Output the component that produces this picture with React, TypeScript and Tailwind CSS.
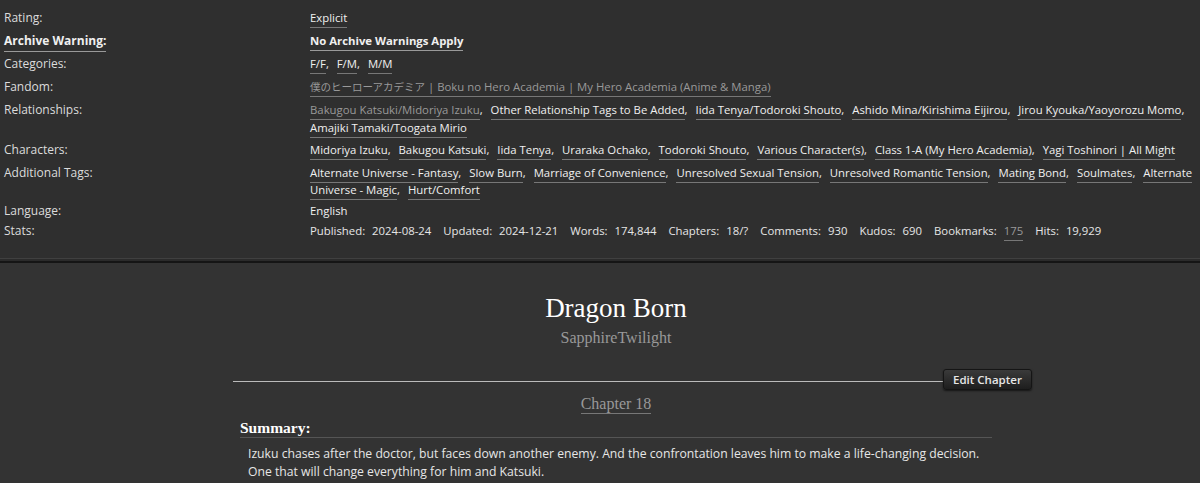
import React from "react";

const sans = "font-['Open_Sans','Noto_Sans_CJK_JP',sans-serif]";
const serif = "font-['Liberation_Serif','Noto_Serif',serif]";

type Tag = { t: string; dim?: boolean };

function TagList({ tags }: { tags: Tag[] }) {
  return (
    <>
      {tags.map((tag, i) => (
        <React.Fragment key={i}>
          <span
            className={`border-b pb-[2px] ${
              tag.dim ? "text-[#999] border-[#777]" : "text-[#f0f0f0] border-[#777]"
            }`}
          >
            {tag.t}
          </span>
          {i < tags.length - 1 ? <span className="text-[#eee] mr-[5px]">,</span> : null}
          {i < tags.length - 1 ? " " : null}
        </React.Fragment>
      ))}
    </>
  );
}

function Row({
  label,
  children,
  labelLink,
  mb = "mb-[5px]",
  lead = "leading-[18px]",
}: {
  label: string;
  children: React.ReactNode;
  labelLink?: boolean;
  mb?: string;
  lead?: string;
}) {
  return (
    <div className={`flex ${mb} ${lead}`}>
      <div className="w-[310px] shrink-0 pl-[4px] text-[12px]">
        {labelLink ? (
          <span className="font-bold text-[#f0f0f0] border-b border-[#999] pb-[2px]">{label}</span>
        ) : (
          <span className="text-[#dcdcdc]">{label}</span>
        )}
      </div>
      <div className="flex-1 pr-[4px] text-[11.35px]">{children}</div>
    </div>
  );
}

function Stat({ k, v, link }: { k: string; v: string; link?: boolean }) {
  return (
    <span className="mr-[12px]">
      <span>{k}:</span>
      {link ? (
        <span className="ml-[7px] text-[#999] border-b border-[#777] pb-[2px]">{v}</span>
      ) : (
        <span className="ml-[7px]">{v}</span>
      )}
    </span>
  );
}

export default function App() {
  return (
    <div className={`w-[1200px] h-[483px] overflow-hidden bg-[#333333] ${sans} text-[12px]`}>
      <div className="bg-[#2f2f2f] pt-[9px] pb-[18px] text-[#e6e6e6]">
        <Row label="Rating:">
          <TagList tags={[{ t: "Explicit" }]} />
        </Row>
        <Row label="Archive Warning:" labelLink>
          <span className="font-bold text-[#f0f0f0] border-b border-[#999] pb-[2px]">
            No Archive Warnings Apply
          </span>
        </Row>
        <Row label="Categories:">
          <TagList tags={[{ t: "F/F" }, { t: "F/M" }, { t: "M/M" }]} />
        </Row>
        <Row label="Fandom:">
          <span className="text-[#999] border-b border-[#777] pb-[2px]">
            <span className="text-[10.5px]">僕のヒーローアカデミア</span> | Boku no Hero Academia | My Hero Academia (Anime &amp; Manga)
          </span>
        </Row>
        <Row label="Relationships:" mb="mb-[4px]">
          <TagList
            tags={[
              { t: "Bakugou Katsuki/Midoriya Izuku", dim: true },
              { t: "Other Relationship Tags to Be Added" },
              { t: "Iida Tenya/Todoroki Shouto" },
              { t: "Ashido Mina/Kirishima Eijirou" },
              { t: "Jirou Kyouka/Yaoyorozu Momo" },
              { t: "Amajiki Tamaki/Toogata Mirio" },
            ]}
          />
        </Row>
        <Row label="Characters:">
          <TagList
            tags={[
              { t: "Midoriya Izuku" },
              { t: "Bakugou Katsuki" },
              { t: "Iida Tenya" },
              { t: "Uraraka Ochako" },
              { t: "Todoroki Shouto" },
              { t: "Various Character(s)" },
              { t: "Class 1-A (My Hero Academia)" },
              { t: "Yagi Toshinori | All Might" },
            ]}
          />
        </Row>
        <Row label="Additional Tags:" mb="mb-[4px]" lead="leading-[17px]">
          <TagList
            tags={[
              { t: "Alternate Universe - Fantasy" },
              { t: "Slow Burn" },
              { t: "Marriage of Convenience" },
              { t: "Unresolved Sexual Tension" },
              { t: "Unresolved Romantic Tension" },
              { t: "Mating Bond" },
              { t: "Soulmates" },
              { t: "Alternate Universe - Magic" },
              { t: "Hurt/Comfort" },
            ]}
          />
        </Row>
        <Row label="Language:" mb="mb-[2px]">
          <span className="text-[#f0f0f0]">English</span>
        </Row>
        <Row label="Stats:" mb="mb-0">
          <span className="text-[#e6e6e6]">
            <Stat k="Published" v="2024-08-24" />
            <Stat k="Updated" v="2024-12-21" />
            <Stat k="Words" v="174,844" />
            <Stat k="Chapters" v="18/?" />
            <Stat k="Comments" v="930" />
            <Stat k="Kudos" v="690" />
            <Stat k="Bookmarks" v="175" link />
            <Stat k="Hits" v="19,929" />
          </span>
        </Row>
      </div>
      <div className="h-[1px] bg-[#404040]" />
      <div className="h-[2px] bg-[#2b2b2b]" />
      <div className="h-[2px] bg-[#151515]" />

      <div className="pl-[32px]">
        <div className="pt-[29px] text-center">
          <h2 className={`${serif} text-[27px] leading-[32px] text-white`}>Dragon Born</h2>
          <div className={`${serif} text-[16px] leading-[20px] text-[#999] mt-[4px]`}>SapphireTwilight</div>
        </div>
        <div className="flex items-center ml-[201px] mt-[21px]">
          <div className="w-[710px] h-[1px] bg-[#bbb] mt-[4px]" />
          <div className="h-[21px] px-[9px] flex items-center rounded-[3px] bg-gradient-to-b from-[#3a3a3a] to-[#1e1e1e] border border-[#151515] shadow-[0_1px_2px_rgba(0,0,0,0.6)] text-[#e6e6e6] text-[11.5px] font-semibold">
            Edit Chapter
          </div>
        </div>
        <div className="text-center mt-[4px] leading-[20px]">
          <span className={`${serif} text-[16px] text-[#999] border-b border-[#777] pb-[1px]`}>
            Chapter 18
          </span>
        </div>
        <div className="mx-[208px] mt-[4px]">
          <div className={`${serif} font-bold text-[15.5px] leading-[18px] text-white border-b border-[#555]`}>
            Summary:
          </div>
          <div className="pl-[8px] pt-[7px] text-[12.2px] leading-[18px] text-[#e6e6e6]">
            Izuku chases after the doctor, but faces down another enemy. And the confrontation leaves him to make a life-changing decision.
            <br />
            One that will change everything for him and Katsuki.
          </div>
        </div>
      </div>
    </div>
  );
}
